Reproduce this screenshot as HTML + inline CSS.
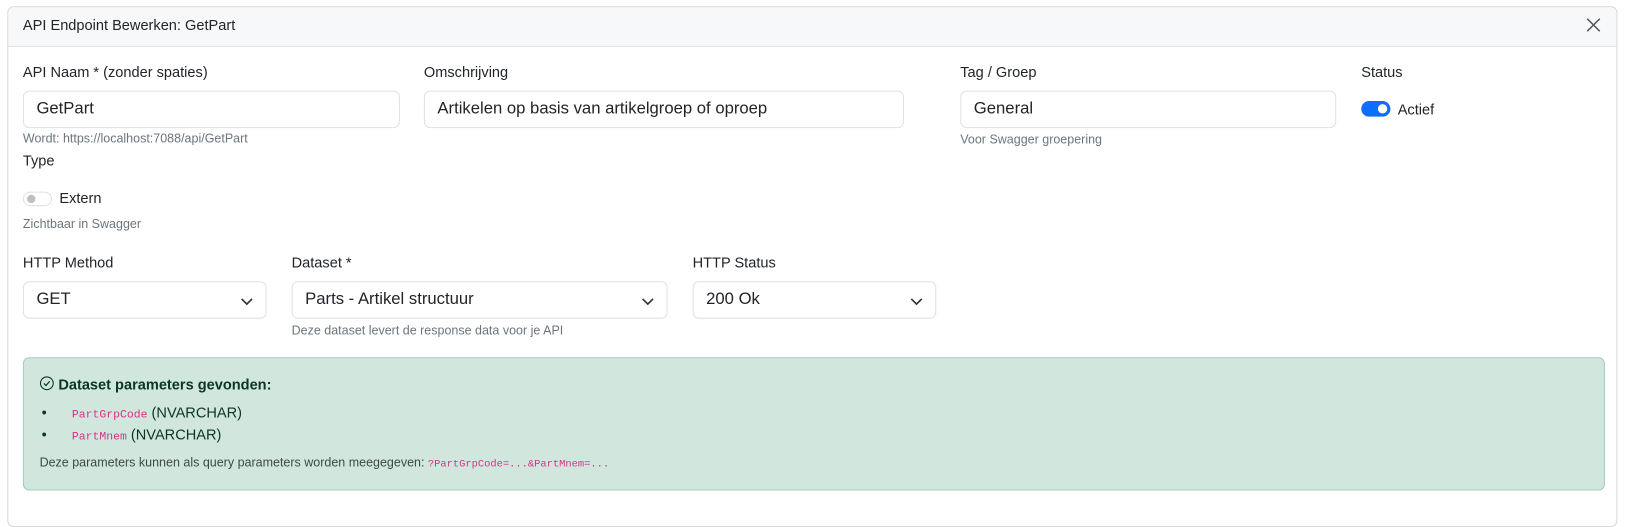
<!DOCTYPE html>
<html><head><style>
body{margin:0;width:1633px;height:497px;background:#fff;font-family:"Liberation Sans",sans-serif;color:#212529;position:relative;overflow:hidden}
#w{position:absolute;left:0;top:0;width:1568px;height:477px;transform:scale(1.0415);transform-origin:0 0}
.a{position:absolute;white-space:nowrap}
.modal{position:absolute;left:7px;top:6px;width:1546px;height:500px;border:1px solid #d7d9dc;border-radius:6px;box-sizing:border-box}
.hdr{position:absolute;left:0;top:0;right:0;height:37px;background:#f7f8f9;border-bottom:1px solid #d7d9dc;border-radius:6px 6px 0 0}
.lbl{font-size:14px}
.inp{position:absolute;height:36px;border:1px solid #dee2e6;border-radius:6px;box-sizing:border-box;font-size:16px;padding:8px 12px;line-height:18px}
.sm{font-size:12px;color:#6c757d}
.chev{position:absolute;right:12px;top:12px}
code{font-family:"Liberation Mono",monospace;color:#d63384;font-size:11px}
</style></head><body><div id="w">
<div class="modal"><div class="hdr"></div></div>
<div class="a" style="left:22px;top:16px;font-size:14px">API Endpoint Bewerken: GetPart</div>
<svg class="a" style="left:1522px;top:16px" width="16" height="16" viewBox="0 0 16 16"><path d="M2 2L14 14M14 2L2 14" stroke="#555" stroke-width="1.5"/></svg>

<div class="a lbl" style="left:22px;top:61px">API Naam * (zonder spaties)</div>
<div class="inp" style="left:22px;top:87px;width:362px">GetPart</div>
<div class="a sm" style="left:22px;top:126px">Wordt: https://localhost:7088/api/GetPart</div>
<div class="a lbl" style="left:22px;top:146px">Type</div>
<div class="a" style="left:22px;top:184px;width:28px;height:14px;border:1px solid #dee2e6;border-radius:8px;box-sizing:border-box"><div style="position:absolute;left:3px;top:2px;width:8px;height:8px;border-radius:50%;background:#bfbfbf"></div></div>
<div class="a lbl" style="left:57px;top:182px">Extern</div>
<div class="a sm" style="left:22px;top:208px">Zichtbaar in Swagger</div>

<div class="a lbl" style="left:407px;top:61px">Omschrijving</div>
<div class="inp" style="left:407px;top:87px;width:461px">Artikelen op basis van artikelgroep of oproep</div>

<div class="a lbl" style="left:922px;top:61px">Tag / Groep</div>
<div class="inp" style="left:922px;top:87px;width:361px">General</div>
<div class="a sm" style="left:922px;top:127px">Voor Swagger groepering</div>

<div class="a lbl" style="left:1307px;top:61px">Status</div>
<div class="a" style="left:1307px;top:97px;width:28px;height:15px;background:#0d6efd;border-radius:8px"><div style="position:absolute;right:3px;top:3px;width:9px;height:9px;border-radius:50%;background:#fff"></div></div>
<div class="a lbl" style="left:1342px;top:97px">Actief</div>

<div class="a lbl" style="left:22px;top:244px">HTTP Method</div>
<div class="inp" style="left:22px;top:270px;width:234px">GET<svg class="chev" width="12" height="12" viewBox="0 0 12 12"><path d="M1 4L6 9L11 4" fill="none" stroke="#333" stroke-width="1.6"/></svg></div>
<div class="a lbl" style="left:280px;top:244px">Dataset *</div>
<div class="inp" style="left:280px;top:270px;width:361px">Parts - Artikel structuur<svg class="chev" width="12" height="12" viewBox="0 0 12 12"><path d="M1 4L6 9L11 4" fill="none" stroke="#333" stroke-width="1.6"/></svg></div>
<div class="a sm" style="left:280px;top:310px">Deze dataset levert de response data voor je API</div>
<div class="a lbl" style="left:665px;top:244px">HTTP Status</div>
<div class="inp" style="left:665px;top:270px;width:234px">200 Ok<svg class="chev" width="12" height="12" viewBox="0 0 12 12"><path d="M1 4L6 9L11 4" fill="none" stroke="#333" stroke-width="1.6"/></svg></div>

<div class="a" style="left:22px;top:343px;width:1519px;height:128px;background:#d1e7dd;border:1px solid #a3cfbb;border-radius:6px;box-sizing:border-box"></div>
<svg class="a" style="left:38px;top:361px" width="14" height="14" viewBox="0 0 16 16"><circle cx="8" cy="8" r="7" fill="none" stroke="#0a3622" stroke-width="1.2"/><path d="M4.8 8.2L7 10.4L11.2 5.8" fill="none" stroke="#0a3622" stroke-width="1.3"/></svg>
<div class="a" style="left:56px;top:361px;font-size:14px;font-weight:bold;color:#0a3622">Dataset parameters gevonden:</div>
<div class="a" style="left:40px;top:388px;font-size:14px;color:#0a3622">•</div>
<div class="a" style="left:69px;top:388px;font-size:14px;color:#0a3622"><code>PartGrpCode</code> (NVARCHAR)</div>
<div class="a" style="left:40px;top:409px;font-size:14px;color:#0a3622">•</div>
<div class="a" style="left:69px;top:409px;font-size:14px;color:#0a3622"><code>PartMnem</code> (NVARCHAR)</div>
<div class="a" style="left:38px;top:437px;font-size:12px;color:#3d4a44">Deze parameters kunnen als query parameters worden meegegeven: <code style="font-size:10px">?PartGrpCode=...&amp;PartMnem=...</code></div>
</div></body></html>
